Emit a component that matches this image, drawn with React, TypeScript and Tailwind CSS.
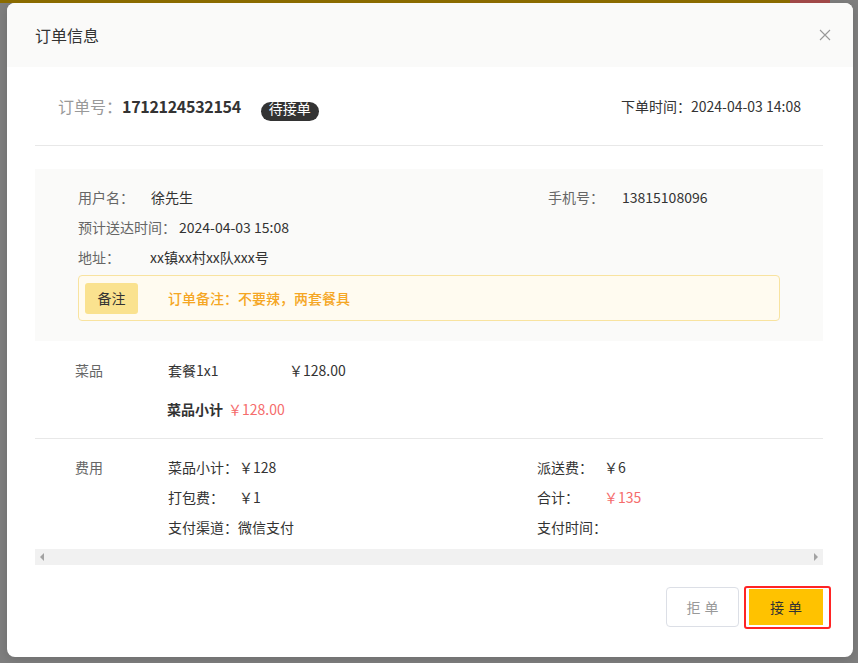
import React from "react";

export default function App() {
  return (
    <div
      className="w-[858px] h-[663px] bg-[#7f7f7f] overflow-hidden relative"
      style={{ fontFamily: '"Noto Sans CJK SC", "Noto Sans", sans-serif' }}
    >
      <div className="h-[3px] flex">
        <div className="w-[790px] bg-[#8a6b00]" />
        <div className="w-[40px] bg-[#a04848]" />
      </div>
      <div className="ml-[7px] w-[846px] h-[654px] bg-white rounded-[8px] flex flex-col overflow-hidden shadow-[0_2px_12px_rgba(0,0,0,0.15)]">
        {/* header */}
        <div className="h-[64px] shrink-0 bg-[#fafaf9] flex items-center justify-between pl-[28px] pr-[22px]">
          <span className="text-[16px] text-[#333] leading-none">订单信息</span>
          <svg width="12" height="12" viewBox="0 0 12 12" className="text-[#999]">
            <path d="M1 1L11 11M11 1L1 11" stroke="currentColor" strokeWidth="1.1" />
          </svg>
        </div>

        <div className="pl-[28px] pr-[30px] flex flex-col">
          {/* order row */}
          <div className="h-[79px] flex items-center justify-between border-b border-[#e8e8e8] pl-[23px] pr-[22px]">
            <div className="flex items-center">
              <span className="text-[16px] text-[#999]">订单号：</span>
              <span className="text-[16px] font-bold text-[#333] tracking-[-0.3px]">1712124532154</span>
              <span className="ml-[20px] mt-[10px] h-[19px] px-[8px] rounded-full bg-[#333] text-white text-[14px] leading-[13px]">
                待接单
              </span>
            </div>
            <div className="text-[14px] text-[#333]">
              下单时间：2024-04-03 14:08
            </div>
          </div>

          {/* info box */}
          <div className="mt-[23px] bg-[#fafaf9] pt-[13px] pb-[20px] pl-[43px] pr-[43px] text-[14px]">
            <div className="h-[30px] flex items-center">
              <div className="flex items-center w-[470px]">
                <span className="w-[73px] text-[#666]">用户名：</span>
                <span className="text-[#333]">徐先生</span>
              </div>
              <div className="flex items-center">
                <span className="w-[74px] text-[#666]">手机号：</span>
                <span className="text-[#333]">13815108096</span>
              </div>
            </div>
            <div className="h-[30px] flex items-center">
              <span className="text-[#666] pr-[3px]">预计送达时间：</span>
              <span className="text-[#333]">2024-04-03 15:08</span>
            </div>
            <div className="h-[30px] flex items-center">
              <span className="w-[72px] text-[#666]">地址：</span>
              <span className="text-[#333]">xx镇xx村xx队xxx号</span>
            </div>
            <div className="mt-[3px] h-[46px] border border-[#f8e3a0] bg-[#fffbf0] rounded-[4px] flex items-center pl-[6px]">
              <div className="w-[53px] h-[31px] rounded-[3px] bg-[#fae28f] flex items-center justify-center text-[#333]">
                备注
              </div>
              <span className="ml-[30px] text-[#f5a623] font-medium">订单备注：不要辣，两套餐具</span>
            </div>
          </div>

          {/* dishes */}
          <div className="mt-[14px] h-[30px] flex items-center text-[14px] pl-[40px]">
            <span className="w-[93px] text-[#666]">菜品</span>
            <span className="w-[121px] text-[#333]">套餐1x1</span>
            <span className="text-[#333]">￥128.00</span>
          </div>
          <div className="mt-[9px] h-[30px] flex items-center text-[14px] pl-[132px]">
            <span className="font-bold text-[#333]">菜品小计</span>
            <span className="ml-[5px] text-[#f56c6c]">￥128.00</span>
          </div>

          {/* fees */}
          <div className="mt-[14px] border-t border-[#e8e8e8] pt-[13px] flex text-[14px] pl-[40px]">
            <div className="w-[93px] h-[30px] flex items-center text-[#666]">费用</div>
            <div className="w-[369px] flex flex-col">
              <div className="h-[30px] flex items-center">
                <span className="w-[71px] text-[#333]">菜品小计：</span>
                <span className="text-[#333]">￥128</span>
              </div>
              <div className="h-[30px] flex items-center">
                <span className="w-[71px] text-[#333]">打包费：</span>
                <span className="text-[#333]">￥1</span>
              </div>
              <div className="h-[30px] flex items-center">
                <span className="text-[#333]">支付渠道：</span>
                <span className="text-[#333]">微信支付</span>
              </div>
            </div>
            <div className="flex flex-col">
              <div className="h-[30px] flex items-center">
                <span className="w-[67px] text-[#333]">派送费：</span>
                <span className="text-[#333]">￥6</span>
              </div>
              <div className="h-[30px] flex items-center">
                <span className="w-[67px] text-[#333]">合计：</span>
                <span className="text-[#f56c6c]">￥135</span>
              </div>
              <div className="h-[30px] flex items-center">
                <span className="text-[#333]">支付时间：</span>
              </div>
            </div>
          </div>

          {/* scrollbar */}
          <div className="mt-[7px] h-[16px] bg-[#f1f1f1] flex items-center justify-between px-[5px]">
            <svg width="5" height="8" viewBox="0 0 5 8">
              <path d="M4 0L0 4L4 8Z" fill="#a3a3a3" />
            </svg>
            <svg width="5" height="8" viewBox="0 0 5 8">
              <path d="M1 0L5 4L1 8Z" fill="#a3a3a3" />
            </svg>
          </div>
        </div>

        {/* footer */}
        <div className="mt-[21px] flex justify-end items-start pr-[22px]">
          <button className="mt-[1px] w-[73px] h-[40px] border border-[#dcdfe6] rounded-[4px] bg-white text-[14px] text-[#999] tracking-[4px] pl-[4px]">
            拒单
          </button>
          <div className="ml-[5px] border-2 border-[#ff2424] rounded-[3px] pt-[1px] pb-[2px] pl-[3px] pr-[6px]">
            <button className="w-[74px] h-[36px] bg-[#ffc200] text-[14px] text-[#333] tracking-[4px] pl-[4px]">
              接单
            </button>
          </div>
        </div>
      </div>
    </div>
  );
}
